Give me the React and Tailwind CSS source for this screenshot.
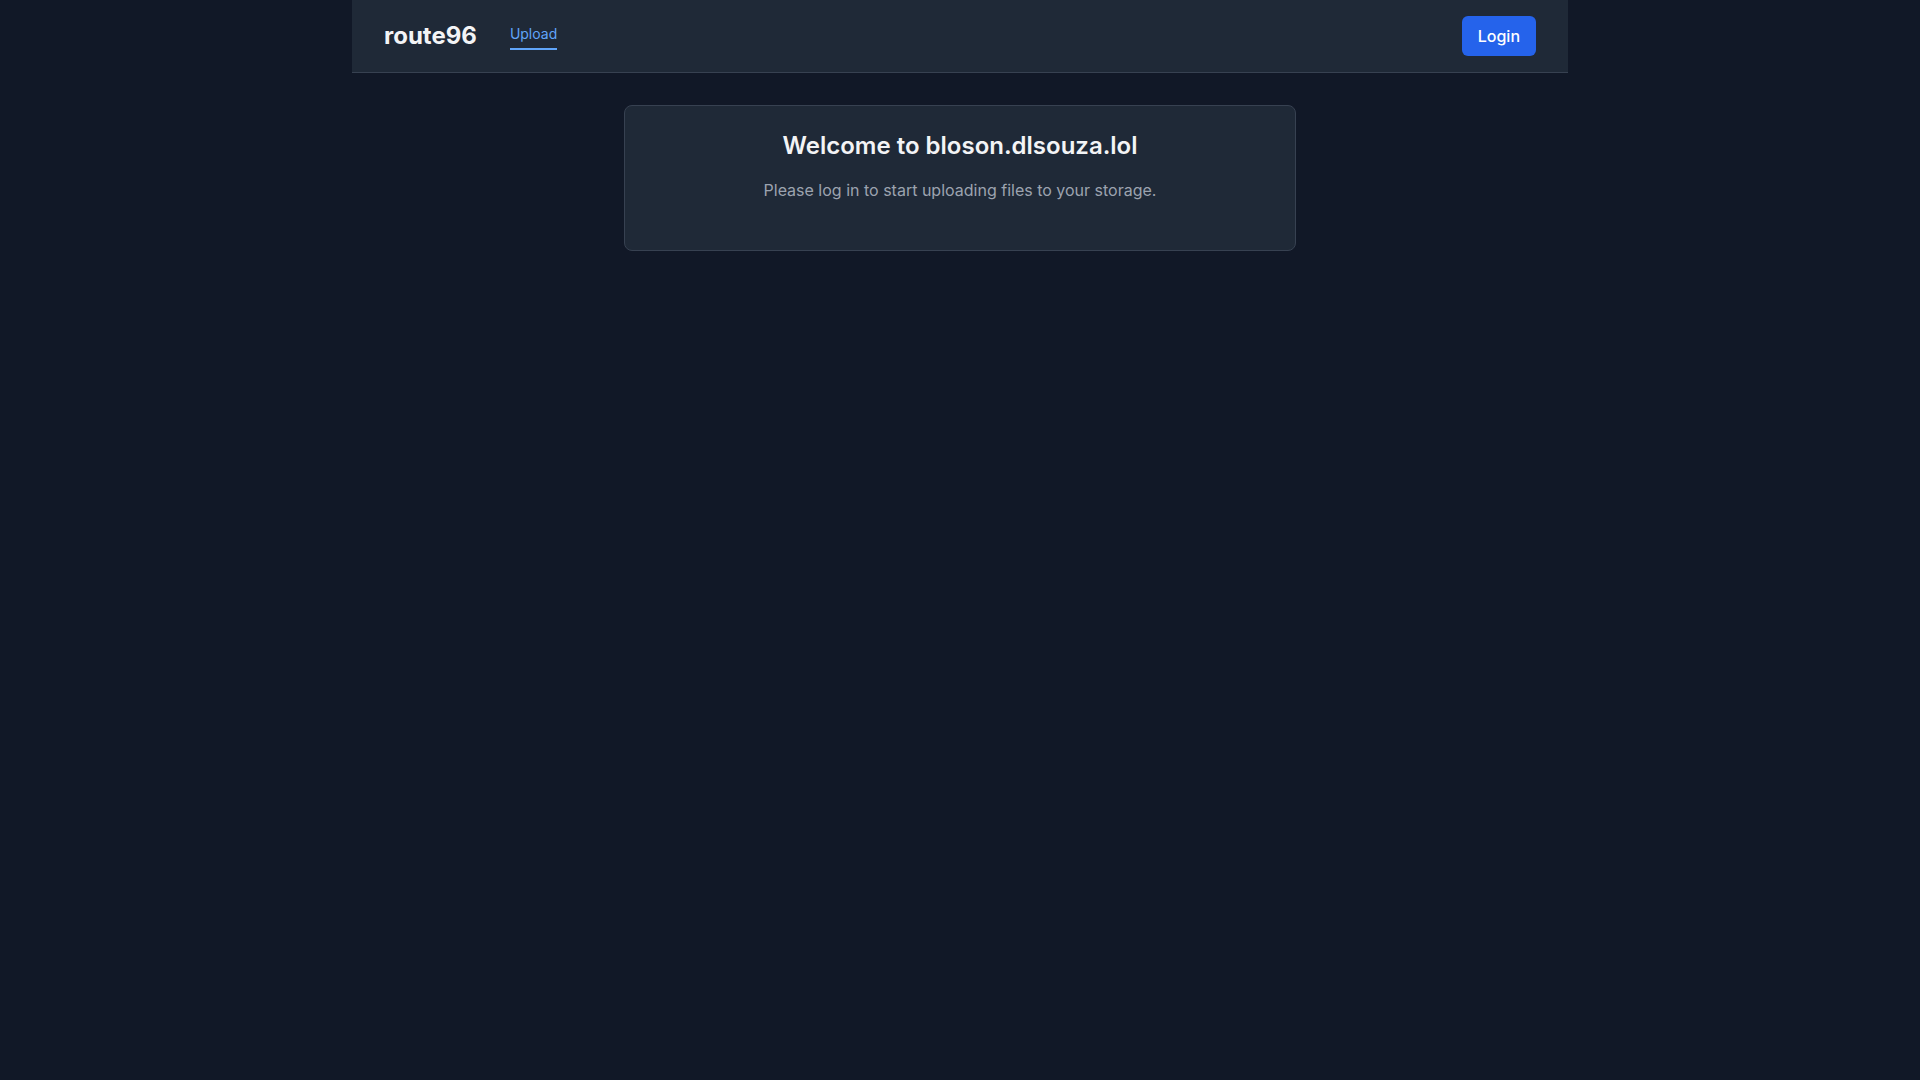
export default function App() {
  return (
    <div className="min-h-screen bg-[#111827] font-['Inter',sans-serif] text-white">
      <header className="mx-auto flex h-[73px] w-[1216px] items-center justify-between border-b border-[#374151] bg-[#1f2937] px-8">
        <div className="flex items-center">
          <span className="text-2xl font-bold text-[#f3f4f6]">route96</span>
          <a className="ml-[33px] mt-[2px] border-b-2 border-[#60a5fa] pb-1 text-sm text-[#60a5fa]">Upload</a>
        </div>
        <button className="rounded-md bg-[#2563eb] px-4 py-2 text-base font-medium text-white">Login</button>
      </header>
      <main className="flex justify-center pt-8">
        <div className="w-[672px] rounded-lg border border-[#374151] bg-[#1f2937] p-6 text-center">
          <h1 className="text-2xl font-semibold text-[#f3f4f6]">Welcome to bloson.dlsouza.lol</h1>
          <p className="mt-4 mb-6 text-base text-[#9ca3af]">Please log in to start uploading files to your storage.</p>
        </div>
      </main>
    </div>
  );
}
